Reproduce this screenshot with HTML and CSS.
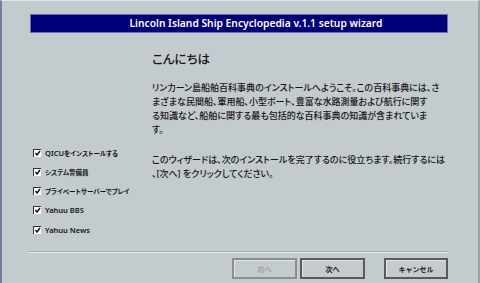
FILE: index.html
```html
<!doctype html>
<html lang="ja">
    <head>
        <meta charset="UTF-8" />
        <meta name="viewport" content="width=device-width, initial-scale=1.0" />
        <title>Setup Wizard</title>
        <link rel="stylesheet" href="styles.css">
    </head>
    <body>
        <div id="wizard">
            <div id="title-bar">Lincoln Island Ship Encyclopedia v.1.1 setup wizard</div>
            <div id="main">
                <div id="options">
                    <label class="option"><span class="box"><svg viewBox="0 0 7 7" width="7" height="7"><path d="M1.5 3 L3 5 L6 1" fill="none" stroke="#111" stroke-width="1.4"/></svg></span>QICU<span class="ja">をインストールする</span></label>
                    <label class="option"><span class="box"><svg viewBox="0 0 7 7" width="7" height="7"><path d="M1.5 3 L3 5 L6 1" fill="none" stroke="#111" stroke-width="1.4"/></svg></span><span class="ja">システム警備員</span></label>
                    <label class="option"><span class="box"><svg viewBox="0 0 7 7" width="7" height="7"><path d="M1.5 3 L3 5 L6 1" fill="none" stroke="#111" stroke-width="1.4"/></svg></span><span class="ja">プライベートサーバーでプレイ</span></label>
                    <label class="option"><span class="box"><svg viewBox="0 0 7 7" width="7" height="7"><path d="M1.5 3 L3 5 L6 1" fill="none" stroke="#111" stroke-width="1.4"/></svg></span>Yahuu BBS</label>
                    <label class="option"><span class="box"><svg viewBox="0 0 7 7" width="7" height="7"><path d="M1.5 3 L3 5 L6 1" fill="none" stroke="#111" stroke-width="1.4"/></svg></span>Yahuu News</label>
                </div>
                <div id="text">
                    <h1>こんにちは</h1>
                    <p>リンカーン島船舶百科事典のインストールへようこそ。この百科事典には、さ<br>まざまな民間船、軍用船、小型ボート、豊富な水路測量および航行に関す<br>る知識など、船舶に関する最も包括的な百科事典の知識が含まれていま<br>す。</p>
                    <p>このウィザードは、次のインストールを完了するのに役立ちます。続行するには<br>、[次へ] をクリックしてください。</p>
                </div>
            </div>
            <div id="footer">
                <button class="btn" disabled>前へ</button>
                <button class="btn">次へ</button>
                <button class="btn cancel">キャンセル</button>
            </div>
        </div>
    </body>
</html>
```

FILE: styles.css
```css
body {
    margin: 0;
    background: #c3cbce;
    font-family: "Noto Sans", "Noto Sans CJK JP", sans-serif;
    font-feature-settings: "palt";
    color: #151515;
}
#wizard {
    width: 480px;
    height: 283px;
    box-sizing: border-box;
    border-left: 2px solid #7a7a9c;
    border-top: 1px solid #dde2e4;
    border-right: 2px solid #9ca3a6;
    display: flex;
    flex-direction: column;
}
#title-bar {
    margin: 13px 30px 0 28px;
    height: 17px;
    background: #00007c;
    border: 1px solid #6a6ea6;
    color: white;
    font-size: 10.25px;
    font-weight: 600;
    line-height: 17px;
    text-align: center;
    padding-left: 34px;
}
#main {
    flex: 1;
    display: flex;
}
#options {
    flex: none;
    width: 150px;
    padding: 110px 0 0 31px;
    box-sizing: border-box;
}
.option {
    display: flex;
    align-items: center;
    height: 19.25px;
    font-size: 7.5px;
    font-weight: 600;
    white-space: nowrap;
}
.ja {
    font-size: 6.5px;
}
.box {
    flex: none;
    width: 7px;
    height: 7px;
    margin-right: 4px;
    background: white;
    border-top: 1px solid #333;
    border-left: 1px solid #333;
    display: flex;
    overflow: hidden;
}
#text {
    white-space: nowrap;
}
h1 {
    margin: 18px 0 0;
    font-size: 12.5px;
    font-weight: 500;
    line-height: 18px;
}
p {
    margin: 12px 0 0;
    font-size: 9px;
    font-weight: 500;
    line-height: 14px;
}
p + p {
    margin-top: 16px;
}
#footer {
    margin: 0 30px 4px 26px;
    border-top: 1px solid #a8b0b3;
    box-shadow: inset 0 1px #e6eaec;
    padding: 6px 0 0;
    display: flex;
    justify-content: flex-end;
    gap: 3px;
}
.btn {
    width: 65px;
    height: 21px;
    background: #c3cbce;
    border: 2px solid #5a5a5c;
    box-shadow: inset 1px 1px #e2e6e8;
    font-family: "Noto Sans CJK JP", sans-serif;
    font-size: 7px;
    font-weight: 600;
    color: #222;
    padding: 0;
}
.btn:disabled {
    color: #a0a6a9;
    border-color: #8a8e90;
}
.cancel {
    width: 64px;
    margin-left: 16px;
}
```
